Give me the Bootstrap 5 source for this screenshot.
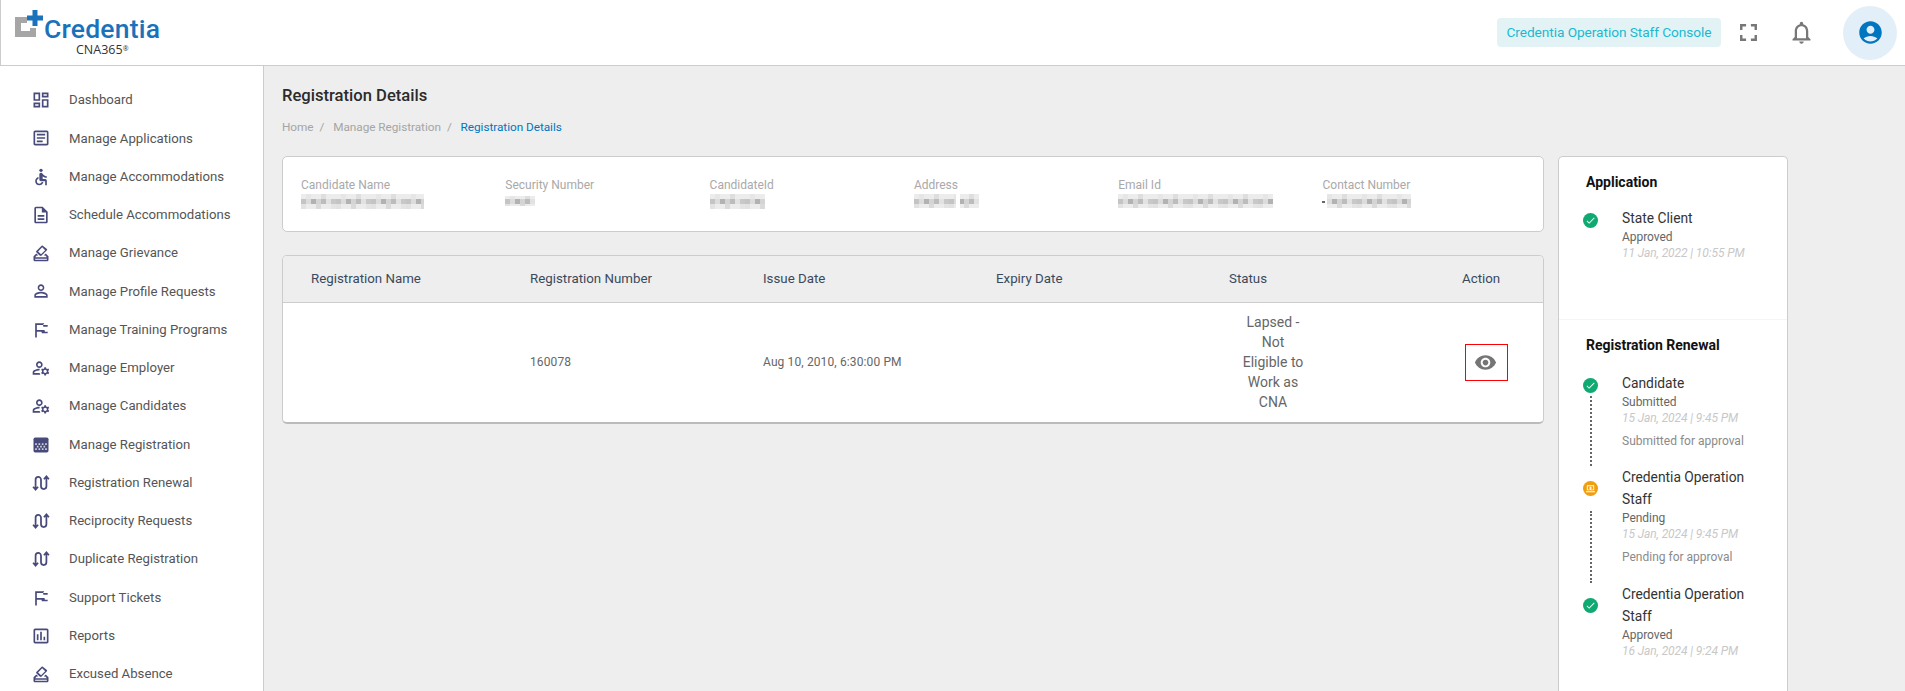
<!DOCTYPE html>
<html lang="en">
<head>
<meta charset="utf-8">
<title>Registration Details</title>
<link href="https://cdn.jsdelivr.net/npm/bootstrap@5.3.0/dist/css/bootstrap.min.css" rel="stylesheet">
<style>
html,body{height:691px;overflow:hidden}
body{font-family:Roboto,"Liberation Sans",sans-serif;background:#eee;color:#333}
.topbar{height:66px;background:#fff;border-left:1px solid #ccc;border-bottom:1px solid #ccc;padding-right:8px}
.logo-box{width:180px;height:65px;position:relative;flex:none}
.logo-name{position:absolute;left:43px;top:16px;font-family:Roboto,sans-serif;font-weight:500;font-size:26.5px;line-height:26px;color:#1a72bb;letter-spacing:.2px}
.logo-sub{position:absolute;left:75px;top:42px;font-size:12.5px;line-height:16px;color:#333;font-family:"Open Sans",sans-serif}
.logo-sub sup{font-size:7px;top:-.5em}
.logo-svg{position:absolute;left:14px;top:10px}
.console-chip{background:#e3f3f5;color:#1ab9d0;font-size:13.7px;line-height:29px;height:29px;border-radius:4px;width:224px;white-space:nowrap;text-align:center;margin-right:13px;letter-spacing:-.07px}
.tool-full{width:29px;height:29px;fill:#777;margin-right:25px}
.tool-bell{width:27px;height:27px;fill:#777;margin-right:28px}
.avatar-disc{width:54px;height:54px;border-radius:50%;background:#e3eff8}
.avatar-disc svg{width:27px;height:27px;fill:#0076c0}
.shell{height:625px;overflow:hidden}
.side{width:264px;flex:none;background:#fff;border-right:1px solid #ccc;padding:15px 0 0 31px;overflow:hidden}
.side-row{height:38.27px;gap:18px;color:#555;font-size:13.2px;white-space:nowrap}
.side-row svg{width:20px;height:20px;flex:none;fill:#484a7c}
.main-area{width:1280px;flex:none;padding:19px 0 0 18px}
.page-title{font-size:16.6px;font-weight:500;line-height:22px;color:#2b2b2b;margin:0}
.crumbs{font-size:11.8px;line-height:16px;margin:12px 0 21px;color:#a5a5a5;letter-spacing:-.05px}
.crumbs .here{color:#0076c0}
.crumbs i{font-style:normal;margin:0 6px}
.panel{background:#fff;border:1px solid #ccc;border-radius:5px}
.info-panel{height:76px;padding:21px 18px 0;margin-bottom:23px}
.info-cell{width:204.3px;flex:none;font-size:12px;line-height:14px;color:#a9a9a9}
.info-cell svg{display:block;margin-top:2px}
.table-panel{height:169px;overflow:hidden;border-bottom-width:2px;border-bottom-color:#bbb}
.reg-table{table-layout:fixed;width:1260px;margin:0;--bs-table-bg:transparent}
.reg-table th{height:46px;background:#eee;font-weight:400;font-size:13.3px;color:#3a4a5c;padding:0 0 0 18px;vertical-align:middle;border-bottom:1px solid #ccc}
.reg-table th:first-child{padding-left:28px}
.reg-table td{height:120px;font-size:12px;color:#666;padding:0 0 0 18px;vertical-align:middle;border:0;letter-spacing:.12px}
.cw-a{width:229px}.cw-b{width:233px}
.status-cell{width:68px;margin-left:10px;text-align:center;font-size:14px;line-height:20px;color:#666;letter-spacing:0}
.eye-box{width:43px;height:37px;border:1px solid #f00;margin-left:3px;padding-right:2px}
.eye-box svg{width:23px;height:23px;fill:#757575}
.track-panel{width:230px;height:535px;margin:90px 0 0 14px;flex:none;padding-top:15px;border-bottom:0;border-bottom-left-radius:0;border-bottom-right-radius:0}
.track-group{padding:0 0 0 24px}
.track-head{font-size:14px;font-weight:700;line-height:20px;color:#111;padding-left:3px;margin:0 0 17px}
.track-head.first-head{margin-bottom:15px}
.track-app{height:112px}
.track-divide{height:1px;background:#f5f5f5;margin:0 0 15px}
.step-left{width:39px;flex:none}
.step-dot{width:15px;height:15px;border-radius:50%;background:#0eaa72;flex:none}
.step-dot.pend{background:#f29d0b}
.step-dot svg{width:11px;height:11px;fill:#fff}
.step-link{width:0;flex:1;border-left:2px dotted #666;margin-left:6.5px}
.pad-a{padding-top:6px}.pad-b{padding-top:15px}
.gap-a{margin-top:3px}.gap-b{margin-top:15px}
.step-one{padding-bottom:17px}
.step-two{padding-bottom:18px}
.hang-one{margin-bottom:-17px}
.hang-two{margin-bottom:-18px}
.step-name{font-size:13.8px;line-height:22px;color:#333}
.step-state{font-size:12px;line-height:16px;color:#666;letter-spacing:-.05px}
.step-when{font-size:12px;line-height:17px;color:#c8c8c8;font-style:italic;letter-spacing:-.1px}
.step-note{font-size:12px;line-height:16px;color:#8a8a8a;margin-top:6px}
.step-text{width:140px}
</style>
</head>
<body>
<svg width="0" height="0" class="d-block">
<defs>
<pattern id="mosaic" width="35" height="15" patternUnits="userSpaceOnUse">
  <rect width="35" height="15" fill="#ececec"/>
  <rect width="5" height="5" x="0" y="5" fill="#c4c4c4"/><rect width="5" height="5" x="5" y="5" fill="#dcdcdc"/><rect width="5" height="5" x="10" y="5" fill="#b2b2b2"/><rect width="5" height="5" x="15" y="5" fill="#d4d4d4"/><rect width="5" height="5" x="20" y="5" fill="#bcbcbc"/><rect width="5" height="5" x="25" y="5" fill="#e2e2e2"/><rect width="5" height="5" x="30" y="5" fill="#c8c8c8"/>
  <rect width="5" height="5" x="5" y="0" fill="#e6e6e6"/><rect width="5" height="5" x="20" y="0" fill="#dedede"/><rect width="5" height="5" x="0" y="10" fill="#e2e2e2"/><rect width="5" height="5" x="15" y="10" fill="#dadada"/><rect width="5" height="5" x="30" y="10" fill="#e4e4e4"/>
</pattern>
<symbol id="i-dash" viewBox="0 0 24 24"><path d="M19 5v2h-4V5h4M9 5v6H5V5h4m10 8v6h-4v-6h4M9 17v2H5v-2h4M21 3h-8v6h8V3zM11 3H3v10h8V3zm10 8h-8v10h8V11zm-10 4H3v6h8v-6z"/></symbol>
<symbol id="i-art" viewBox="0 0 24 24"><path d="M19 5v14H5V5h14m0-2H5c-1.100 0-2 .9-2 2v14c0 1.100.9 2 2 2h14c1.100 0 2-.9 2-2V5c0-1.100-.9-2-2-2zM14 17H7v-2h7v2zm3-4H7v-2h10v2zm0-4H7V7h10v2z"/></symbol>
<symbol id="i-acc" viewBox="0 0 24 24"><circle cx="12" cy="4" r="2"/><path d="M19 13v-2c-1.540.02-3.090-.75-4.070-1.830l-1.290-1.430c-.17-.19-.38-.34-.61-.45-.01 0-.01-.01-.02-.01H13c-.35-.2-.75-.3-1.190-.26C10.760 7.110 10 8.040 10 9.090V15c0 1.100.9 2 2 2h5v5h2v-5.500c0-1.100-.9-2-2-2h-3v-3.450c1.290 1.070 3.250 1.940 5 1.950zm-6.170 5c-.41 1.160-1.520 2-2.830 2-1.660 0-3-1.340-3-3 0-1.310.84-2.410 2-2.830V12.100c-2.280.46-4 2.480-4 4.900 0 2.760 2.240 5 5 5 2.420 0 4.440-1.720 4.900-4h-2.070z"/></symbol>
<symbol id="i-doc" viewBox="0 0 24 24"><path d="M8 16h8v2H8zm0-4h8v2H8zm6-10H6c-1.100 0-2 .9-2 2v16c0 1.100.89 2 1.990 2H18c1.100 0 2-.9 2-2V8l-6-6zm4 18H6V4h7v5h5v11z"/></symbol>
<symbol id="i-vote" viewBox="0 0 24 24"><path d="M18 13h-.68l-2 2h1.910L19 17H5l1.780-2h2.050l-2-2H6l-3 3v4c0 1.100.89 2 1.990 2H19c1.100 0 2-.89 2-2v-4l-3-3zm1 7H5v-1h14v1zm-7.660-4.980c.39.39 1.020.39 1.410 0l6.360-6.360c.39-.39.39-1.020 0-1.410L14.160 3.300c-.38-.4-1.010-.4-1.400-.01L6.390 9.660c-.39.39-.39 1.020 0 1.410l4.950 4.950zm2.120-9.900l3.540 3.540-4.950 4.950-3.540-3.540 4.950-4.950z"/></symbol>
<symbol id="i-person" viewBox="0 0 24 24"><path d="M12 5.900c1.160 0 2.100.94 2.100 2.100s-.94 2.100-2.100 2.100S9.900 9.160 9.900 8s.94-2.100 2.100-2.100m0 9c2.970 0 6.100 1.460 6.100 2.100v1.100H5.900V17c0-.64 3.130-2.100 6.100-2.100M12 4C9.790 4 8 5.790 8 8s1.790 4 4 4 4-1.790 4-4-1.790-4-4-4zm0 9c-2.670 0-8 1.340-8 4v3h16v-3c0-2.660-5.330-4-8-4z"/></symbol>
<symbol id="i-flag" viewBox="0 0 24 24"><path d="M14.430 6l.4 2H20v6h-3.360l-.4-2H7V6h7.430M16 4H5v17h2v-7h5.600l.4 2h7V6h-5.600L16 4z"/></symbol>
<symbol id="i-manage" viewBox="0 0 24 24"><path d="M4 18v-.65c0-.34.16-.66.41-.81C6.100 15.530 8.030 15 10 15c.03 0 .05 0 .08.01.1-.7.3-1.370.59-1.980-.22-.02-.44-.03-.67-.03-2.420 0-4.680.67-6.610 1.820-.88.52-1.390 1.500-1.390 2.530V20h9.260c-.42-.6-.75-1.280-.97-2H4zM10 12c2.210 0 4-1.790 4-4s-1.790-4-4-4-4 1.790-4 4 1.790 4 4 4zm0-6c1.100 0 2 .9 2 2s-.9 2-2 2-2-.9-2-2 .9-2 2-2z"/><path d="M20.750 16c0-.22-.03-.42-.06-.63l1.140-1.010-1-1.730-1.450.49c-.32-.27-.68-.48-1.080-.63L18 11h-2l-.3 1.490c-.4.15-.76.36-1.080.63l-1.450-.49-1 1.730 1.140 1.010c-.03.21-.06.41-.06.63s.03.42.06.63l-1.140 1.010 1 1.730 1.450-.49c.32.27.68.48 1.080.63L16 21h2l.3-1.490c.4-.15.76-.36 1.080-.63l1.450.49 1-1.730-1.140-1.010c.03-.21.06-.41.06-.63zM17 18c-1.100 0-2-.9-2-2s.9-2 2-2 2 .9 2 2-.9 2-2 2z"/></symbol>
<symbol id="i-grid" viewBox="0 0 24 24"><path d="M5 3h14a2 2 0 0 1 2 2v14a2 2 0 0 1-2 2H5a2 2 0 0 1-2-2V5a2 2 0 0 1 2-2z"/><path fill="#fff" opacity=".75" d="M5 10h2v2H5zm4 0h2v2H9zm4 0h2v2h-2zm4 0h2v2h-2zM7 13h2v2H7zm4 0h2v2h-2zm4 0h2v2h-2zM5 16h2v2H5zm4 0h2v2H9zm4 0h2v2h-2zm4 0h2v2h-2z"/></symbol>
<symbol id="i-route" viewBox="0 0 24 24"><path fill="none" stroke="#484a7c" stroke-width="2.100" d="M5.500 19V8a3.250 3.250 0 0 1 6.500 0v8a3.250 3.250 0 0 0 6.500 0V5M2.500 16.500l3 3.500 3-3.500M15.500 7.500l3-3.500 3 3.500"/></symbol>
<symbol id="i-report" viewBox="0 0 24 24"><path d="M19 3H5c-1.100 0-2 .9-2 2v14c0 1.100.9 2 2 2h14c1.100 0 2-.9 2-2V5c0-1.100-.9-2-2-2zm0 16H5V5h14v14zM7 10h2v7H7zm4-3h2v10h-2zm4 6h2v4h-2z"/></symbol>
<symbol id="i-check" viewBox="0 0 24 24"><path d="M9 16.170 4.830 12l-1.420 1.410L9 19 21 7l-1.410-1.410z"/></symbol>
</defs>
</svg>

<header class="topbar d-flex align-items-center justify-content-between">
  <div class="logo-box">
    <svg class="logo-svg" width="28" height="28" viewBox="0 0 28 28"><path fill="#a6a6a6" d="M0 7h12v6H6v8h9v-3h6v9H0z"/><path fill="#1a72bb" d="M17.500 0h5v5.500H28v5h-5.500V16h-5v-5.500H12v-5h5.500z"/></svg>
    <span class="logo-name">Credentia</span>
    <span class="logo-sub">CNA365<sup>®</sup></span>
  </div>
  <div class="d-flex align-items-center">
    <div class="console-chip">Credentia Operation Staff Console</div>
    <svg class="tool-full" viewBox="0 0 24 24"><path d="M7 14H5v5h5v-2H7v-3zm-2-4h2V7h3V5H5v5zm12 7h-3v2h5v-5h-2v3zM14 5v2h3v3h2V5h-5z"/></svg>
    <svg class="tool-bell" viewBox="0 0 24 24"><path d="M12 22c1.100 0 2-.9 2-2h-4c0 1.100.9 2 2 2zm6-6v-5c0-3.070-1.630-5.640-4.500-6.320V4c0-.83-.67-1.500-1.500-1.500s-1.500.67-1.500 1.500v.68C7.640 5.360 6 7.920 6 11v5l-2 2v1h16v-1l-2-2zm-2 1H8v-6c0-2.480 1.510-4.500 4-4.500s4 2.020 4 4.500v6z"/></svg>
    <div class="avatar-disc d-flex align-items-center justify-content-center">
      <svg viewBox="0 0 24 24"><path d="M12 2C6.480 2 2 6.480 2 12s4.480 10 10 10 10-4.480 10-10S17.520 2 12 2zm0 4c1.930 0 3.500 1.570 3.500 3.500S13.930 13 12 13s-3.500-1.570-3.500-3.500S10.070 6 12 6zm0 14c-2.030 0-4.430-.82-6.140-2.880C7.550 15.800 9.680 15 12 15s4.450.8 6.140 2.120C16.430 19.180 14.030 20 12 20z"/></svg>
    </div>
  </div>
</header>

<div class="shell d-flex">
  <nav class="side d-flex flex-column">
    <div class="side-row d-flex align-items-center flex-shrink-0"><svg><use href="#i-dash"/></svg>Dashboard</div>
    <div class="side-row d-flex align-items-center flex-shrink-0"><svg><use href="#i-art"/></svg>Manage Applications</div>
    <div class="side-row d-flex align-items-center flex-shrink-0"><svg><use href="#i-acc"/></svg>Manage Accommodations</div>
    <div class="side-row d-flex align-items-center flex-shrink-0"><svg><use href="#i-doc"/></svg>Schedule Accommodations</div>
    <div class="side-row d-flex align-items-center flex-shrink-0"><svg><use href="#i-vote"/></svg>Manage Grievance</div>
    <div class="side-row d-flex align-items-center flex-shrink-0"><svg><use href="#i-person"/></svg>Manage Profile Requests</div>
    <div class="side-row d-flex align-items-center flex-shrink-0"><svg><use href="#i-flag"/></svg>Manage Training Programs</div>
    <div class="side-row d-flex align-items-center flex-shrink-0"><svg><use href="#i-manage"/></svg>Manage Employer</div>
    <div class="side-row d-flex align-items-center flex-shrink-0"><svg><use href="#i-manage"/></svg>Manage Candidates</div>
    <div class="side-row d-flex align-items-center flex-shrink-0"><svg><use href="#i-grid"/></svg>Manage Registration</div>
    <div class="side-row d-flex align-items-center flex-shrink-0"><svg><use href="#i-route"/></svg>Registration Renewal</div>
    <div class="side-row d-flex align-items-center flex-shrink-0"><svg><use href="#i-route"/></svg>Reciprocity Requests</div>
    <div class="side-row d-flex align-items-center flex-shrink-0"><svg><use href="#i-route"/></svg>Duplicate Registration</div>
    <div class="side-row d-flex align-items-center flex-shrink-0"><svg><use href="#i-flag"/></svg>Support Tickets</div>
    <div class="side-row d-flex align-items-center flex-shrink-0"><svg><use href="#i-report"/></svg>Reports</div>
    <div class="side-row d-flex align-items-center flex-shrink-0"><svg><use href="#i-vote"/></svg>Excused Absence</div>
  </nav>

  <main class="main-area">
    <h1 class="page-title">Registration Details</h1>
    <div class="crumbs">Home<i>/</i> Manage Registration<i>/</i> <span class="here">Registration Details</span></div>

    <section class="panel info-panel d-flex">
      <div class="info-cell">Candidate Name
        <svg width="123" height="15"><rect width="123" height="15" fill="url(#mosaic)"/></svg></div>
      <div class="info-cell">Security Number
        <svg width="30" height="15"><rect width="30" height="10" y="2" fill="url(#mosaic)"/></svg></div>
      <div class="info-cell">CandidateId
        <svg width="55" height="15"><rect width="55" height="15" fill="url(#mosaic)"/></svg></div>
      <div class="info-cell">Address
        <svg width="65" height="15"><rect width="42" height="14" fill="url(#mosaic)"/><rect x="46" width="19" height="14" fill="url(#mosaic)"/></svg></div>
      <div class="info-cell">Email Id
        <svg width="156" height="15"><rect width="155" height="14" fill="url(#mosaic)"/></svg></div>
      <div class="info-cell">Contact Number
        <svg width="90" height="15"><rect y="7" width="3" height="2" fill="#666"/><rect x="5" width="84" height="14" fill="url(#mosaic)"/></svg></div>
    </section>

    <section class="panel table-panel">
      <table class="table reg-table">
        <colgroup><col class="cw-a"><col class="cw-b"><col class="cw-b"><col class="cw-b"><col class="cw-b"><col></colgroup>
        <thead><tr><th>Registration Name</th><th>Registration Number</th><th>Issue Date</th><th>Expiry Date</th><th>Status</th><th>Action</th></tr></thead>
        <tbody><tr>
          <td></td><td>160078</td><td>Aug 10, 2010, 6:30:00 PM</td><td></td>
          <td><div class="status-cell">Lapsed - Not Eligible to Work as CNA</div></td>
          <td><div class="eye-box d-flex align-items-center justify-content-center"><svg viewBox="0 0 24 24"><path d="M12 4.500C7 4.500 2.730 7.610 1 12c1.730 4.390 6 7.500 11 7.500s9.270-3.110 11-7.500c-1.730-4.390-6-7.500-11-7.500zM12 17c-2.760 0-5-2.240-5-5s2.240-5 5-5 5 2.240 5 5-2.240 5-5 5zm0-8c-1.660 0-3 1.340-3 3s1.340 3 3 3 3-1.340 3-3-1.340-3-3-3z"/></svg></div></td>
        </tr></tbody>
      </table>
    </section>
  </main>

  <aside class="panel track-panel">
    <div class="track-group">
      <h2 class="track-head first-head">Application</h2>
      <div class="d-flex track-app">
        <div class="step-left d-flex flex-column pad-a"><div class="step-dot d-flex align-items-center justify-content-center"><svg><use href="#i-check"/></svg></div></div>
        <div class="step-text"><div class="step-name">State Client</div><div class="step-state">Approved</div><div class="step-when">11 Jan, 2022 | 10:55 PM</div></div>
      </div>
    </div>
    <div class="track-divide"></div>
    <div class="track-group">
      <h2 class="track-head">Registration Renewal</h2>
      <div class="d-flex step-one">
        <div class="step-left d-flex flex-column pad-a hang-one"><div class="step-dot d-flex align-items-center justify-content-center"><svg><use href="#i-check"/></svg></div><div class="step-link gap-a"></div></div>
        <div class="step-text"><div class="step-name">Candidate</div><div class="step-state">Submitted</div><div class="step-when">15 Jan, 2024 | 9:45 PM</div><div class="step-note">Submitted for approval</div></div>
      </div>
      <div class="d-flex step-two">
        <div class="step-left d-flex flex-column pad-b hang-two"><div class="step-dot pend d-flex align-items-center justify-content-center"><svg viewBox="0 0 24 24"><path d="M4 5h16v11H4zm2 2v7h12V7zM2 18h20v2H2zM11 8h2v2h2v2h-2v2h-2v-2H9v-2h2z"/></svg></div><div class="step-link gap-b"></div></div>
        <div class="step-text"><div class="step-name">Credentia Operation Staff</div><div class="step-state">Pending</div><div class="step-when">15 Jan, 2024 | 9:45 PM</div><div class="step-note">Pending for approval</div></div>
      </div>
      <div class="d-flex">
        <div class="step-left d-flex flex-column pad-b"><div class="step-dot d-flex align-items-center justify-content-center"><svg><use href="#i-check"/></svg></div></div>
        <div class="step-text"><div class="step-name">Credentia Operation Staff</div><div class="step-state">Approved</div><div class="step-when">16 Jan, 2024 | 9:24 PM</div></div>
      </div>
    </div>
  </aside>
</div>
<script src="https://cdn.jsdelivr.net/npm/bootstrap@5.3.0/dist/js/bootstrap.bundle.min.js"></script>
</body>
</html>
